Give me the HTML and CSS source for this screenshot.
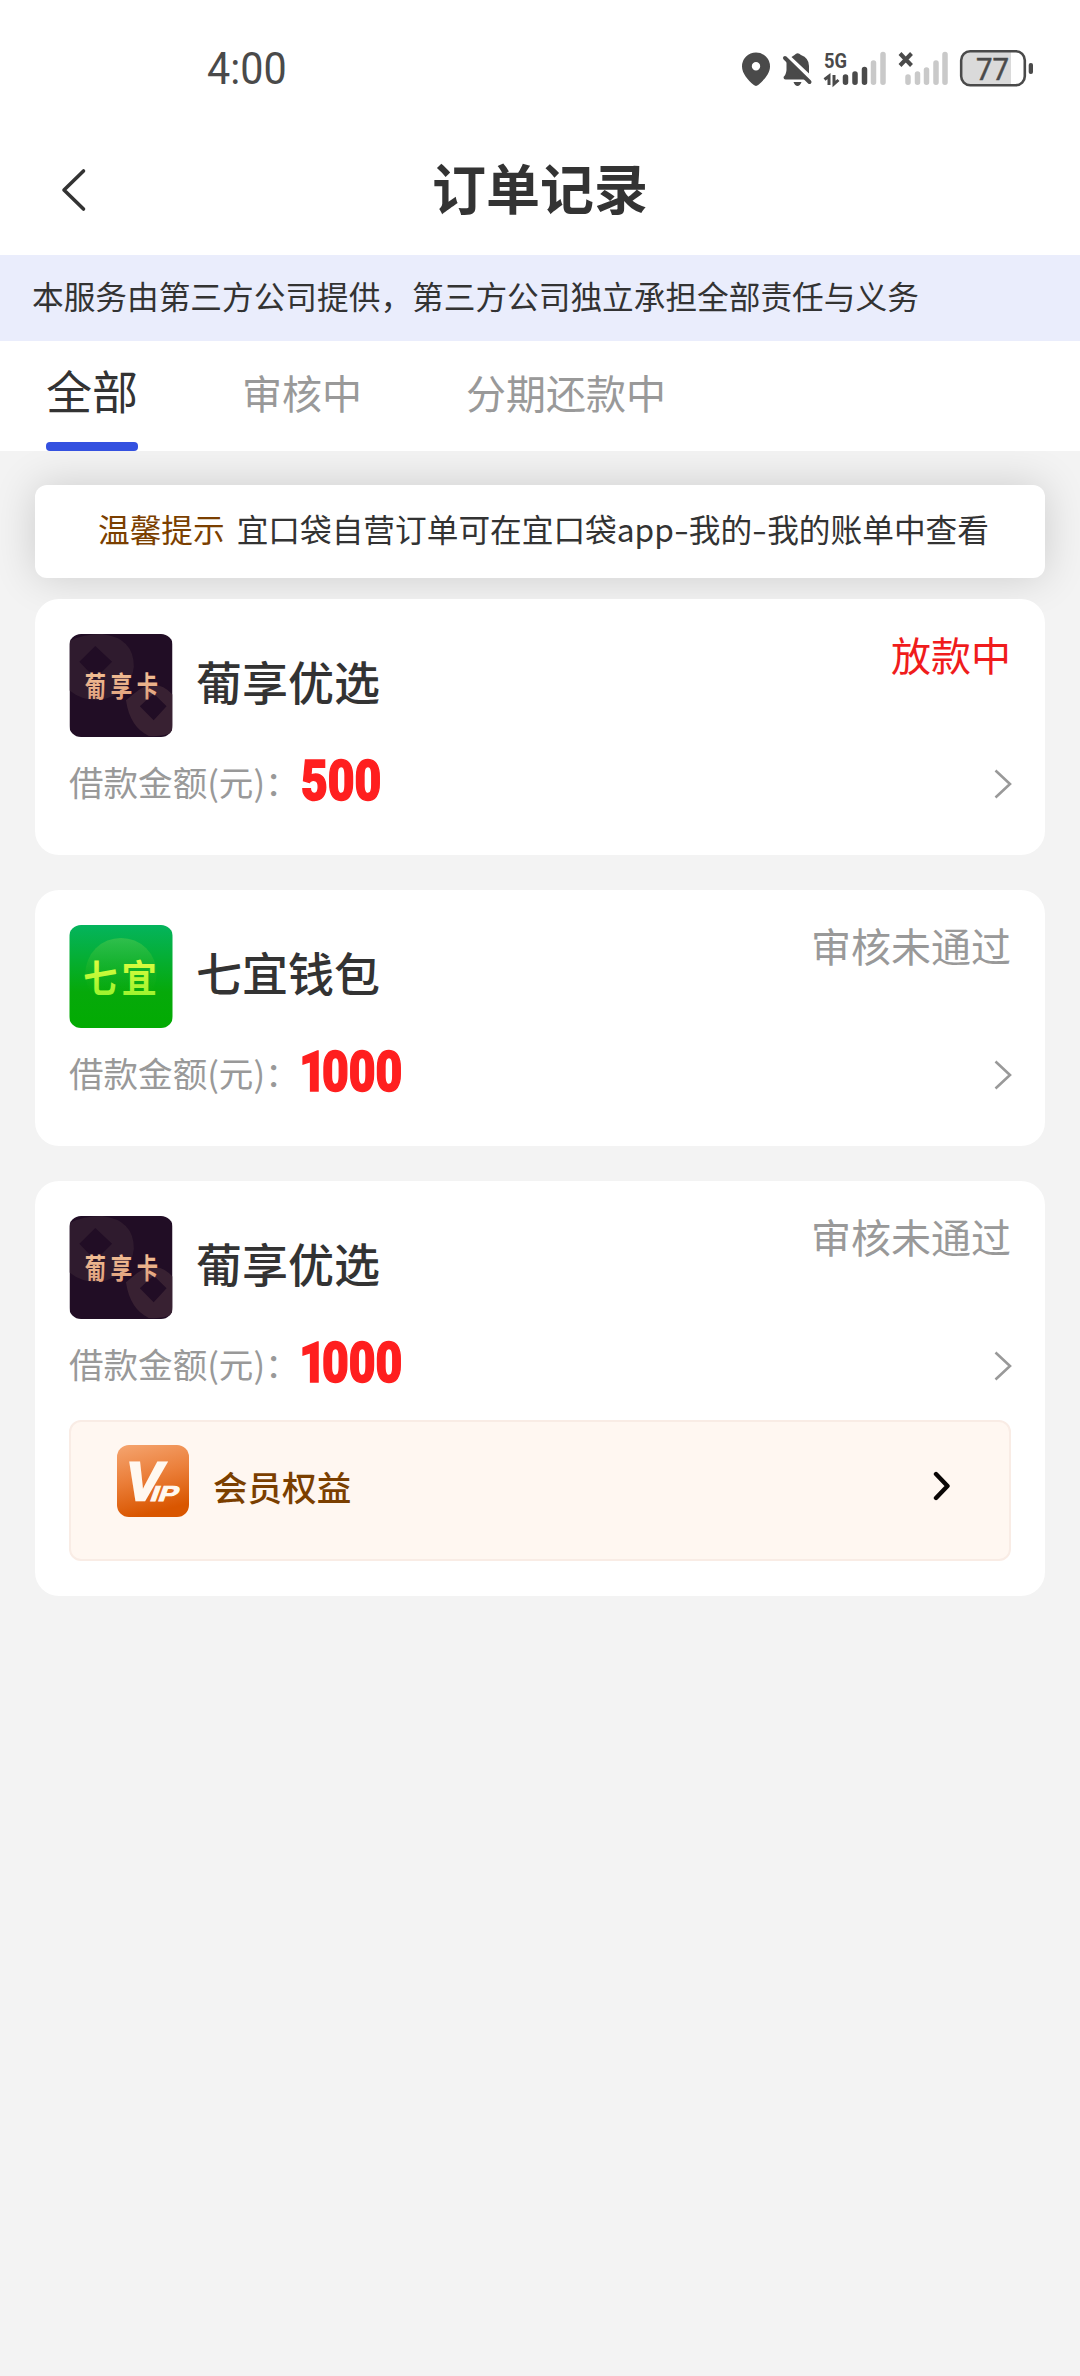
FILE: index.html
```html
<!DOCTYPE html>
<html lang="zh-CN">
<head>
<meta charset="utf-8">
<title>订单记录</title>
<link rel="stylesheet" href="styles.css">
</head>
<body>
<svg class="defs" width="0" height="0" aria-hidden="true">
  <defs>
    <linearGradient id="gold" x1="0" y1="0" x2="0" y2="1"><stop offset="0" stop-color="#f6c79b"/><stop offset="1" stop-color="#dd9b78"/></linearGradient>
    <linearGradient id="green" x1="0" y1="0" x2="0" y2="1"><stop offset="0" stop-color="#04b45d"/><stop offset=".65" stop-color="#06a90a"/><stop offset="1" stop-color="#02ab02"/></linearGradient>
    <linearGradient id="glow" x1="0" y1="0" x2="0" y2="1"><stop offset="0" stop-color="#4cc84c" stop-opacity=".6"/><stop offset=".8" stop-color="#20b010" stop-opacity="0"/></linearGradient>
    <linearGradient id="lime" x1="0" y1="0" x2="0" y2="1"><stop offset="0" stop-color="#f4ff45"/><stop offset="1" stop-color="#8df22a"/></linearGradient>
    <linearGradient id="orange" x1="0" y1="0" x2=".25" y2="1"><stop offset="0" stop-color="#f5a570"/><stop offset=".5" stop-color="#eb7f3a"/><stop offset="1" stop-color="#d95600"/></linearGradient>
    <symbol id="puxiang" viewBox="0 0 104 104">
      <rect width="104" height="104" fill="#210d25"/>
      <path fill="#2f1b2e" fill-rule="evenodd" d="M0 7Q14 0 33 0Q65 4 65 33Q62 60 30 67Q12 67 0 57ZM26 12L10 28L26 45L43 28Z"/>
      <path fill="#382132" fill-rule="evenodd" d="M57 67L64 61Q86 42 104 61V99Q96 104 80 103Q61 94 57 67ZM85 60L71 73L85 87L98 73Z"/>
      <g class="logo-text" fill="url(#gold)">
        <text transform="translate(15.500 64) scale(.74 1)">葡</text>
        <text transform="translate(41.500 64) scale(.76 1)">享</text>
        <text transform="translate(68 64) scale(.74 1)">卡</text>
      </g>
    </symbol>
  </defs>
</svg>

<header class="header">
  <div class="statusbar">
    <span class="time">4:00</span>
    <svg class="status-icons" viewBox="740 46 296 44" width="296" height="44">
      <path fill="#4a4a4a" fill-rule="evenodd" d="M756 52.500a14 14 0 0 1 14 14c0 7-6 13.500-11.500 18.300q-2.500 2.200-5 0C748 80 742 73.500 742 66.500a14 14 0 0 1 14-14ZM756 62a4.200 4.200 0 1 0 0 8.400a4.200 4.200 0 0 0 0-8.400Z"/>
      <path fill="#4a4a4a" d="M786.500 61L806 79.500H785.500Q783.500 79.500 783.500 77Q786 75 786.500 70ZM791.500 57L794.500 55Q797.500 51.500 801 55Q809 58 809 66V73.500ZM793.500 82H801.500Q800 86 797.500 86Q795 86 793.500 82Z"/>
      <path stroke="#4a4a4a" stroke-width="4" stroke-linecap="round" d="M785 58L809.500 82"/>
      <text class="net" x="824" y="67.500" textLength="23" lengthAdjust="spacingAndGlyphs">5G</text>
      <path fill="none" stroke="#4a4a4a" stroke-width="3" d="M824.500 79.500L829 76V85M834 75V84L838.500 80"/>
      <g fill="none" stroke-width="5.500" stroke-linecap="round">
        <path stroke="#4a4a4a" d="M845.500 77V82.300M855 74V82.300M864.500 69.500V82.300"/>
        <path stroke="#c9c9c9" d="M873.500 63V82.300M883 54.500V82.300M908 77V82.300M917.500 74V82.300M926.500 70V82.300M936 63V82.300M945 54.500V82.300"/>
      </g>
      <path stroke="#4a4a4a" stroke-width="4" d="M900 53.500L911.500 65.500M911.500 53.500L900 65.500"/>
      <path fill="#dadada" d="M971 52H1011V85H971Q962.500 85 962.500 76V61Q962.500 52 971 52Z"/>
      <rect x="961.200" y="51.200" width="63.600" height="34" rx="9" fill="none" stroke="#4a4a4a" stroke-width="2.600"/>
      <rect x="1028.700" y="63" width="4.300" height="11" rx="2" fill="#4a4a4a"/>
      <text class="charge" x="976" y="80" textLength="33" lengthAdjust="spacingAndGlyphs">77</text>
    </svg>
  </div>
  <div class="navbar">
    <svg class="back" viewBox="0 0 26 44" width="26" height="44"><path d="M22.500 3L3 22L22.500 41" fill="none" stroke="#333" stroke-width="3.600" stroke-linecap="round" stroke-linejoin="round"/></svg>
    <h1 class="title">订单记录</h1>
  </div>
</header>

<p class="notice">本服务由第三方公司提供，第三方公司独立承担全部责任与义务</p>

<nav class="tabs">
  <a class="tab active">全部</a>
  <a class="tab">审核中</a>
  <a class="tab">分期还款中</a>
</nav>

<main class="content">
  <p class="tip"><span class="tip-label">温馨提示</span><span>宜口袋自营订单可在宜口袋app<span class="dash">-</span>我的<span class="dash">-</span>我的账单中查看</span></p>

  <section class="card">
    <div class="card-head">
      <svg class="logo" viewBox="0 0 104 104"><use href="#puxiang"/></svg>
      <h2 class="name">葡享优选</h2>
      <span class="status red">放款中</span>
    </div>
    <div class="card-row">
      <span class="label">借款金额(元)：</span><span class="amount">500</span>
      <svg class="arrow" viewBox="0 0 18 30"><path d="M1.500 1.500L16 15L1.500 28.500"/></svg>
    </div>
  </section>

  <section class="card">
    <div class="card-head">
      <svg class="logo" viewBox="0 0 104 104">
        <rect width="104" height="104" fill="url(#green)"/>
        <circle cx="52" cy="49" r="36" fill="url(#glow)"/>
        <g class="qiyi-text" fill="url(#lime)">
          <text transform="translate(14 68) scale(.9 1)">七</text>
          <text transform="translate(52.500 68) scale(.94 1)">宜</text>
        </g>
      </svg>
      <h2 class="name">七宜钱包</h2>
      <span class="status">审核未通过</span>
    </div>
    <div class="card-row">
      <span class="label">借款金额(元)：</span><span class="amount"><span class="one">1</span>000</span>
      <svg class="arrow" viewBox="0 0 18 30"><path d="M1.500 1.500L16 15L1.500 28.500"/></svg>
    </div>
  </section>

  <section class="card">
    <div class="card-head">
      <svg class="logo" viewBox="0 0 104 104"><use href="#puxiang"/></svg>
      <h2 class="name">葡享优选</h2>
      <span class="status">审核未通过</span>
    </div>
    <div class="card-row">
      <span class="label">借款金额(元)：</span><span class="amount"><span class="one">1</span>000</span>
      <svg class="arrow" viewBox="0 0 18 30"><path d="M1.500 1.500L16 15L1.500 28.500"/></svg>
    </div>
    <div class="benefit">
      <svg class="vip" viewBox="0 0 72 72" width="72" height="72">
        <rect width="72" height="72" rx="12" fill="url(#orange)"/>
        <g class="vip-text" fill="#fff8f0" stroke="#fff8f0">
          <text transform="translate(5.500 55) skewX(-12)" font-size="54" stroke-width="2.500">V</text>
          <text transform="translate(32 55.500) skewX(-20)" font-size="21.500" stroke-width="1" textLength="27" lengthAdjust="spacingAndGlyphs">IP</text>
        </g>
      </svg>
      <span class="benefit-name">会员权益</span>
      <svg class="benefit-arrow" viewBox="0 0 18 30" width="18" height="30"><path d="M3 3L14.500 15L3 27" fill="none" stroke="#0a0605" stroke-width="4.400" stroke-linecap="round" stroke-linejoin="round"/></svg>
    </div>
  </section>
</main>
</body>
</html>
```
FILE: styles.css
```css
* { box-sizing: border-box; }
body {
  margin: 0;
  min-height: 2376px;
  background: #f3f3f3;
  color: #333;
  font-family: "Noto Sans CJK SC", sans-serif;
  overflow-x: hidden;
}
h1, h2, p { margin: 0; }
.defs { display: block; height: 0; }

.header { height: 255px; background: #fff; }
.statusbar {
  display: flex;
  justify-content: space-between;
  align-items: flex-start;
  height: 124px;
  padding: 46px 44px 0 207px;
}
.time {
  font: 400 43.500px/48px Roboto, sans-serif;
  color: #4a4a4a;
  transform: scaleX(.95);
  transform-origin: left;
}
.status-icons { display: block; }
.net { font: 700 20px Roboto, sans-serif; fill: #4a4a4a; }
.charge { font: 400 32px Roboto, sans-serif; fill: #4a4a4a; stroke: #4a4a4a; stroke-width: .5px; }
.navbar {
  display: grid;
  grid-template-columns: 26px 1fr 26px;
  align-items: center;
  height: 131px;
  padding: 0 60px;
}
.title { text-align: center; font-size: 54px; font-weight: 700; line-height: 80px; padding-bottom: 5px; }
.back { margin: 1px 0 0 1px; }

.notice {
  height: 86px;
  padding-left: 32px;
  background: #eaedfc;
  font-size: 31.680px;
  line-height: 80px;
  white-space: nowrap;
}

.tabs {
  position: relative;
  z-index: 1;
  display: flex;
  gap: 104px;
  height: 110px;
  padding-left: 46px;
  background: #fff;
}
.tab { color: #999; font-size: 40px; line-height: 103px; }
.active {
  position: relative;
  color: #333;
  font-size: 46px;
  line-height: 97px;
}
.active::after {
  content: "";
  position: absolute;
  inset: auto 0 0;
  height: 9px;
  border-radius: 4px;
  background: #3451e0;
}

.content { padding: 34px 35px; display: flex; flex-direction: column; }
.tip {
  display: flex;
  gap: 12px;
  height: 93px;
  margin-bottom: 21px;
  padding-left: 63px;
  border-radius: 12px;
  background: #fff;
  box-shadow: 0 0 43px rgba(0, 0, 0, .16);
  font-size: 31.680px;
  line-height: 86px;
  white-space: nowrap;
}
.tip-label { color: #7b3f00; }
.dash { display: inline-block; width: 15px; transform: scaleX(1.35); transform-origin: left; }

.card {
  position: relative;
  margin-bottom: 35px;
  padding: 35px 34px;
  border-radius: 24px;
  background: #fff;
}
.card-head { display: flex; height: 103px; }
.logo { width: 104px; height: 103px; border-radius: 12px; margin-right: 23px; }
.name { flex: 1; font-size: 46px; font-weight: 500; line-height: 93px; }
.status { color: #999; font-size: 40px; line-height: 40px; }
.status.red { color: #f01c1c; }
.logo-text { font: 700 29px "Noto Sans CJK SC", sans-serif; }
.qiyi-text { font: 700 38px "Noto Sans CJK SC", sans-serif; }
.vip-text { font-family: "Liberation Sans", sans-serif; font-weight: 700; }

.card-row { display: flex; align-items: center; height: 83px; padding-top: 4px; }
.label { width: 232px; color: #999; font-size: 34.560px; line-height: 80px; white-space: nowrap; }
.amount {
  color: #ff1f1f;
  font: 900 55px/80px Roboto, sans-serif;
  -webkit-text-stroke: 1.500px #ff1f1f;
  transform: scaleX(.84);
  transform-origin: left;
}
.one { margin: 0 -5px 0 -2px; }
.arrow { width: 18px; height: 30px; margin: 7px -1px 0 auto; fill: none; stroke: #999; stroke-width: 2.600; }

.benefit {
  display: flex;
  align-items: flex-start;
  height: 141px;
  margin-top: 18px;
  padding: 23px 58px 0 46px;
  border: 2px solid #f9ece5;
  border-radius: 12px;
  background: #fff7f1;
}
.benefit-name { flex: 1; margin-left: 24px; color: #7b3f00; font-size: 34.560px; font-weight: 500; line-height: 82px; }
.benefit-arrow { margin-top: 26px; }
```
